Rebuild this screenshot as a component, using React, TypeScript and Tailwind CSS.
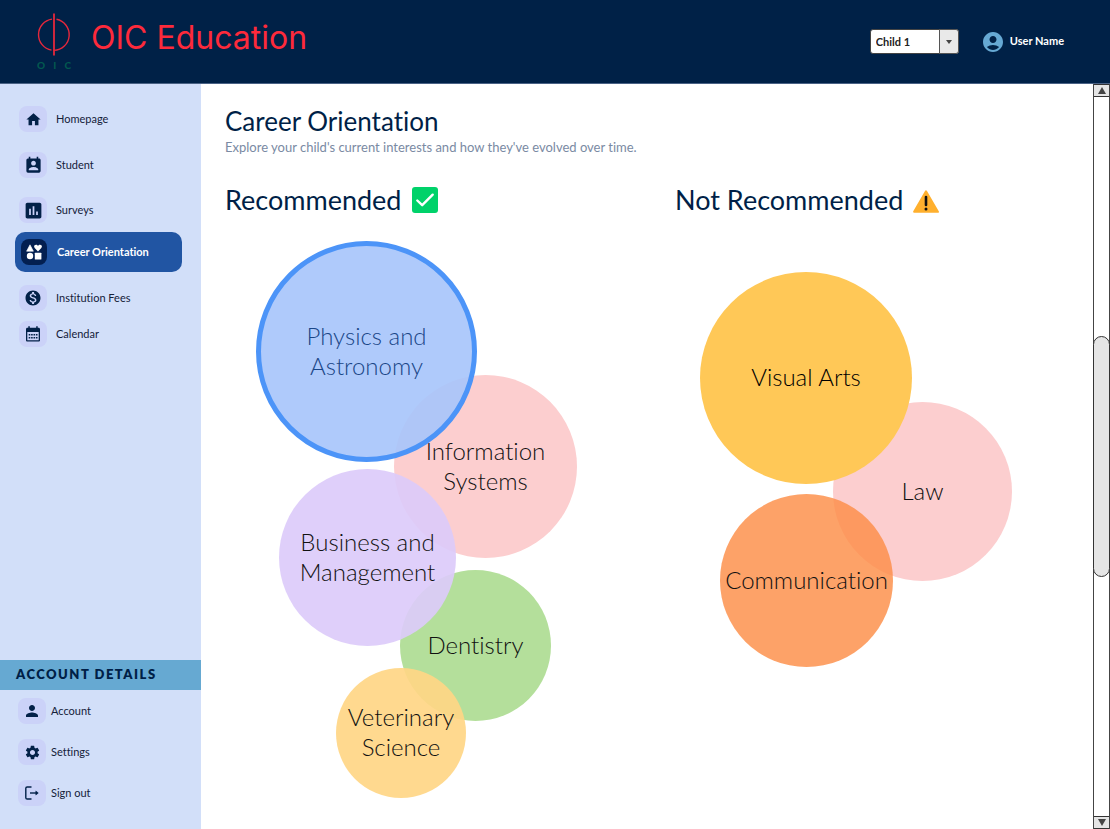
import type { ReactNode } from "react";
import {
  MdAccountCircle,
  MdHome,
  MdInsertChart,
  MdMonetizationOn,
  MdPermContactCalendar,
  MdPerson,
  MdSettings,
} from "react-icons/md";

function ShapesIcon() {
  return (
    <svg viewBox="0 0 16 16" className="size-4" fill="currentColor" aria-hidden="true">
      <path d="M4 .8 7.4 7.2H.6z" stroke="currentColor" strokeLinejoin="round" strokeWidth=".6" />
      <path d="M12 7.4 8.9 4.3C7.3 2.6 8.3.8 10 .8c.9 0 1.6.5 2 1.200.4-.7 1.100-1.200 2-1.200 1.700 0 2.700 1.800 1.100 3.500z" />
      <circle cx="4" cy="12" r="3.200" />
      <rect x="8.800" y="8.800" width="6.600" height="6.600" rx=".5" />
    </svg>
  );
}

function CalendarIcon() {
  return (
    <svg viewBox="0 0 16 16" className="size-4" fill="currentColor" aria-hidden="true">
      <path
        fillRule="evenodd"
        d="M3.300.3h1.500v1.500h6.400V.3h1.500v1.500h.9c.8 0 1.400.6 1.400 1.400v11c0 .8-.6 1.400-1.400 1.400H2.400c-.8 0-1.400-.6-1.400-1.400v-11c0-.8.6-1.400 1.400-1.400h.9zM2.300 6.100v8.200h11.400V6.100z"
      />
      <path d="M3.700 8h1.600v1.600H3.700zM6.100 8h1.600v1.600H6.100zM8.500 8h1.600v1.600H8.500zM10.900 8h1.600v1.600h-1.600zM3.700 11h1.600v1.600H3.700zM6.100 11h1.600v1.600H6.100zM8.500 11h1.600v1.600H8.500zM10.900 11h1.600v1.600h-1.600z" />
    </svg>
  );
}

function SignOutIcon() {
  return (
    <svg viewBox="0 0 16 16" className="size-4" fill="none" stroke="currentColor" strokeWidth="1.4" aria-hidden="true">
      <path d="M7.500 2H3.200C2.300 2 1.800 2.500 1.800 3.300v9.400c0 .8.5 1.300 1.400 1.300h4.300" />
      <path d="M6 8h7.500" />
      <path d="m11.800 5.900 2.500 2.100-2.500 2.100z" fill="currentColor" strokeWidth=".5" />
    </svg>
  );
}

function Logo() {
  return (
    <div className="flex w-[34px] flex-col gap-1">
      <svg viewBox="0 0 34 43" className="h-[43px] w-[34px]" fill="none" stroke="#e5283c" aria-hidden="true">
        <path d="M17 .5v42" strokeWidth="1.800" />
        <path d="M15 6.100A15.700 15.700 0 0 0 14.500 37.100" strokeWidth="1.400" />
        <path d="M19.500 6.300A15.700 15.700 0 0 1 17 37.400" strokeWidth="1.400" />
      </svg>
      <div className="flex justify-between text-[10px] leading-[10px] font-black text-[#03584f]">
        <span>O</span>
        <span>I</span>
        <span>C</span>
      </div>
    </div>
  );
}

function NavItem({ icon, label, className = "" }: { icon: ReactNode; label: string; className?: string }) {
  return (
    <li className={className}>
      <a href="#" className="flex h-[26px] items-center gap-[9px] pl-[19px] text-[#14213a]">
        <span className="flex h-[26px] w-7 items-center justify-center rounded-lg bg-[#cbd2f8] text-[#032148]">{icon}</span>
        {label}
      </a>
    </li>
  );
}

function AccountItem({ icon, label }: { icon: ReactNode; label: string }) {
  return (
    <li>
      <a href="#" className="flex h-[26px] items-center gap-[5px] pl-[18px] text-[#14213a]">
        <span className="flex h-[26px] w-7 items-center justify-center rounded-lg bg-[#cbd2f8] text-[#032148]">{icon}</span>
        {label}
      </a>
    </li>
  );
}

function Bubble({ children, className }: { children: ReactNode; className: string }) {
  return (
    <button
      type="button"
      className={`absolute flex items-center justify-center rounded-full pb-0.5 text-center text-2xl leading-[30px] font-light whitespace-nowrap ${className}`}
    >
      <span>{children}</span>
    </button>
  );
}

function ScrollRail() {
  return (
    <div className="flex w-[17px] shrink-0 flex-col border-x border-[#444]">
      <button type="button" aria-label="Scroll up" className="flex h-[13px] items-center justify-center border-y border-[#333] bg-[#e5e5e5]">
        <svg viewBox="0 0 8 7" className="h-[7px] w-2" fill="#444" aria-hidden="true">
          <path d="M4 0 8 7H0z" />
        </svg>
      </button>
      <div className="grow" />
      <div className="-mx-px grow rounded-full border border-[#333] bg-[#e5e5e5]" />
      <div className="grow" />
      <button type="button" aria-label="Scroll down" className="flex h-[13px] items-center justify-center border-y border-[#333] bg-[#e5e5e5]">
        <svg viewBox="0 0 8 7" className="h-[7px] w-2" fill="#444" aria-hidden="true">
          <path d="M4 7 8 0H0z" />
        </svg>
      </button>
    </div>
  );
}

export default function App() {
  return (
    <div className="flex min-h-screen flex-col bg-white font-[Lato,sans-serif] text-[#001f47] [font-variant-ligatures:none]">
      <header className="flex h-[84px] items-center border-b border-[#4a6285] bg-[#002147] pr-[46px] pl-[37px]">
        <Logo />
        <span className="ml-5 pb-2 font-[Inter,sans-serif] text-[32px] leading-10 font-normal text-[#fd2a3b]">OIC Education</span>
        <div className="relative ml-auto h-[25px] w-[89px]">
          <select
            aria-label="Child"
            className="block h-full w-full appearance-none rounded-[3px] border border-[#444] bg-white pr-5 pl-[5px] text-[11px] leading-4 font-bold text-[#222]"
          >
            <option>Child 1</option>
          </select>
          <span className="pointer-events-none absolute inset-y-0 right-0 flex w-5 items-center justify-center rounded-r-[3px] border border-[#555] bg-[#e9e9e9]">
            <svg viewBox="0 0 6 4" className="h-1 w-1.5" fill="#444" aria-hidden="true">
              <path d="M0 0h6L3 4z" />
            </svg>
          </span>
        </div>
        <a href="#" className="ml-[22px] flex items-center gap-[5px] text-[11px] font-bold text-white">
          <MdAccountCircle className="size-6 text-[#66a9d4]" />
          User Name
        </a>
      </header>

      <div className="flex grow">
        <aside className="flex w-[201px] shrink-0 flex-col bg-[#d2dff9] pt-[22px] pb-[23px] text-[11px]">
          <nav aria-label="Main">
            <ul className="flex flex-col">
              <NavItem icon={<MdHome className="size-[17px]" />} label="Homepage" />
              <NavItem className="mt-5" icon={<MdPermContactCalendar className="size-[19px]" />} label="Student" />
              <NavItem className="mt-[19px]" icon={<MdInsertChart className="size-[21px]" />} label="Surveys" />
              <li className="mt-[9px] px-[15px]">
                <a
                  href="#"
                  aria-current="page"
                  className="flex h-10 w-[167px] items-center gap-[10px] rounded-[10px] bg-[#2155a3] pl-[6px] font-bold text-white"
                >
                  <span className="flex size-[26px] items-center justify-center rounded-lg bg-[#031f50]">
                    <ShapesIcon />
                  </span>
                  Career Orientation
                </a>
              </li>
              <NavItem className="mt-[13px]" icon={<MdMonetizationOn className="size-[18px]" />} label="Institution Fees" />
              <NavItem className="mt-[10px]" icon={<CalendarIcon />} label="Calendar" />
            </ul>
          </nav>
          <section className="mt-auto">
            <h2 className="flex h-[30px] items-center bg-[#66a9d2] pl-4 text-[13px] font-extrabold tracking-[1.5px]">ACCOUNT DETAILS</h2>
            <ul className="mt-2 flex flex-col gap-[15px]">
              <AccountItem icon={<MdPerson className="size-[18px]" />} label="Account" />
              <AccountItem icon={<MdSettings className="size-[17px]" />} label="Settings" />
              <AccountItem icon={<SignOutIcon />} label="Sign out" />
            </ul>
          </section>
        </aside>

        <main className="grow pt-5 pl-6">
          <h1 className="text-[26px] leading-[34px]">Career Orientation</h1>
          <p className="text-[13px] leading-[18px] text-[#7a8aa3]">
            Explore your child's current interests and how they've evolved over time.
          </p>
          <div className="mt-7 grid grid-cols-2 gap-8">
            <section>
              <h2 className="flex h-8 items-center gap-2.5 text-[27px]">
                Recommended
                <svg viewBox="0 0 26 26" className="size-[26px]" aria-hidden="true">
                  <rect width="26" height="26" rx="3" fill="#00d26a" />
                  <path d="m5.300 13.500 4.900 4.700L20.700 7.700" fill="none" stroke="#fff" strokeWidth="2.400" strokeLinecap="round" strokeLinejoin="round" />
                </svg>
              </h2>
              <div className="relative mt-4 h-[570px]">
                <Bubble className="top-[143px] left-[169px] size-[183px] bg-[#fccecf] text-[#111]">
                  Information
                  <br />
                  Systems
                </Bubble>
                <Bubble className="top-[338px] left-[175px] size-[151px] bg-[#b4df9b] text-[#111]">Dentistry</Bubble>
                <Bubble className="top-[9px] left-[31px] size-[221px] border-5 border-[#4c94f8] bg-[#a8c6fb]/92 text-[#1a4687]">
                  Physics and
                  <br />
                  Astronomy
                </Bubble>
                <Bubble className="top-[237px] left-[54px] size-[177px] bg-[#dccbfa]/92 text-[#111]">
                  Business and
                  <br />
                  Management
                </Bubble>
                <Bubble className="top-[436px] left-[111px] size-[130px] bg-[#ffd685]/92 text-[#111]">
                  Veterinary
                  <br />
                  Science
                </Bubble>
              </div>
            </section>
            <section>
              <h2 className="flex h-8 items-center gap-2.5 text-[27px]">
                Not Recommended
                <svg viewBox="0 0 26 23" className="mt-0.5 h-[23px] w-[26px]" aria-hidden="true">
                  <path d="M13 1.300 24.900 21.800H1.100z" fill="#ffb02e" stroke="#ffb02e" strokeWidth="2" strokeLinejoin="round" />
                  <path d="M13 7v8" stroke="#111" strokeWidth="2.600" strokeLinecap="round" />
                  <circle cx="13" cy="19" r="1.500" fill="#111" />
                </svg>
              </h2>
              <div className="relative mt-4 h-[570px]">
                <Bubble className="top-[170px] left-[158px] size-[179px] bg-[#fccecf] text-[#111]">Law</Bubble>
                <Bubble className="top-10 left-[25px] size-[212px] bg-[#ffc857] text-black">Visual Arts</Bubble>
                <Bubble className="top-[262px] left-[45px] size-[173px] bg-[#fc8e47]/82 text-[#111]">Communication</Bubble>
              </div>
            </section>
          </div>
        </main>
        <ScrollRail />
      </div>
    </div>
  );
}
